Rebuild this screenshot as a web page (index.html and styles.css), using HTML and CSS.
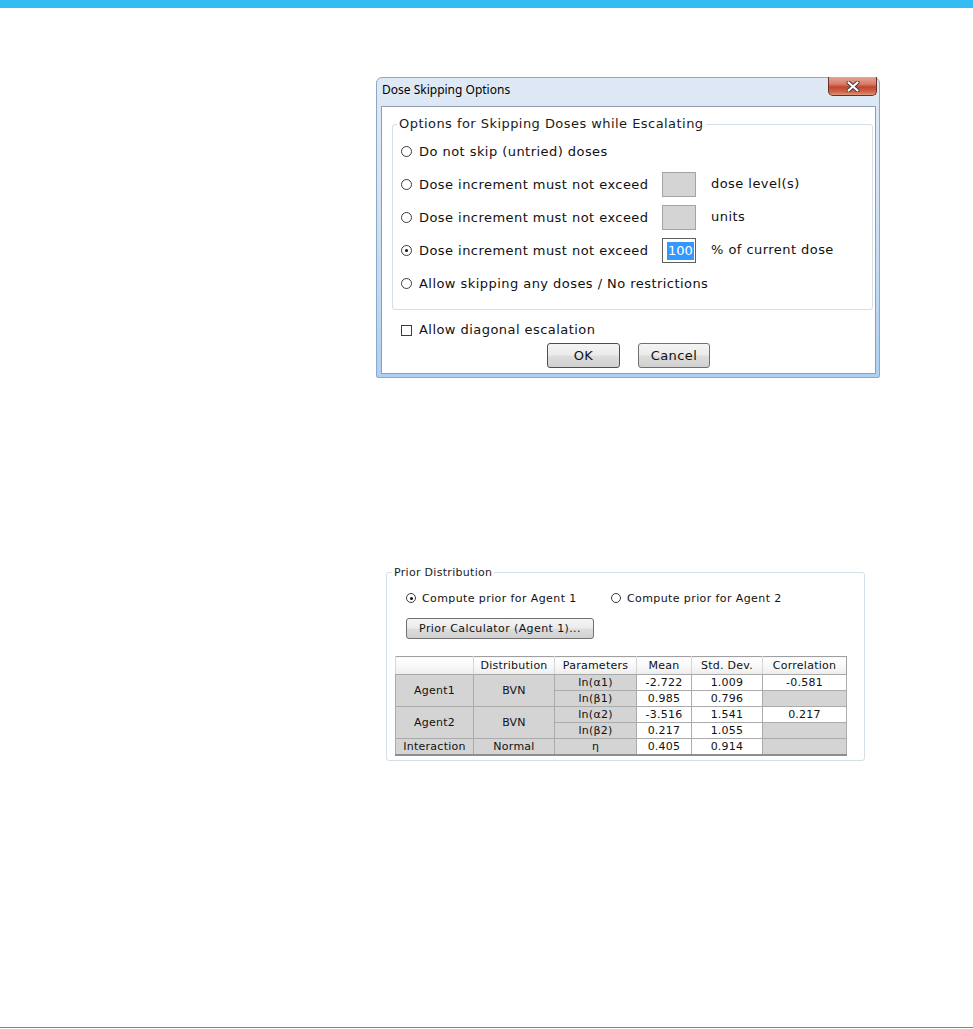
FILE: index.html
```html
<!DOCTYPE html>
<html>
<head>
    <title>Dose Skipping Options</title>
    <meta charset="UTF-8">
    <link rel="stylesheet" href="styles.css">
</head>
<body>

<div class="topbar"></div>

<div class="page">

    <div class="dialog">
        <div class="titlebar">
            <span class="title">Dose Skipping Options</span>
            <span class="close-btn">
                <svg width="14" height="11" viewBox="0 0 14 11">
                    <path d="M2.5 1.5 L11.5 9.5 M11.5 1.5 L2.5 9.5" stroke="#3a3a3a" stroke-width="4" stroke-linecap="round"/>
                    <path d="M2.5 1.5 L11.5 9.5 M11.5 1.5 L2.5 9.5" stroke="#ffffff" stroke-width="2.2" stroke-linecap="round"/>
                </svg>
            </span>
        </div>
        <div class="client">
            <fieldset class="group">
                <legend>Options for Skipping Doses while Escalating</legend>
                <div class="opt-row">
                    <span class="radio"></span>
                    <span class="opt-label">Do not skip (untried) doses</span>
                </div>
                <div class="opt-row">
                    <span class="radio"></span>
                    <span class="opt-label fixed">Dose increment must not exceed</span>
                    <span class="num-box"></span>
                    <span class="unit">dose level(s)</span>
                </div>
                <div class="opt-row">
                    <span class="radio"></span>
                    <span class="opt-label fixed">Dose increment must not exceed</span>
                    <span class="num-box"></span>
                    <span class="unit">units</span>
                </div>
                <div class="opt-row">
                    <span class="radio checked"></span>
                    <span class="opt-label fixed">Dose increment must not exceed</span>
                    <span class="num-box active"><span class="sel">100</span></span>
                    <span class="unit">% of current dose</span>
                </div>
                <div class="opt-row">
                    <span class="radio"></span>
                    <span class="opt-label">Allow skipping any doses / No restrictions</span>
                </div>
            </fieldset>

            <div class="check-row">
                <span class="checkbox"></span>
                <span class="opt-label">Allow diagonal escalation</span>
            </div>

            <div class="btn-row">
                <button class="win-btn ok">OK</button>
                <button class="win-btn cancel">Cancel</button>
            </div>
        </div>
    </div>

    <div class="prior">
        <fieldset class="prior-group">
            <legend>Prior Distribution</legend>
            <div class="agent-row">
                <div class="agent-opt first">
                    <span class="radio small checked"></span>
                    <span>Compute prior for Agent 1</span>
                </div>
                <div class="agent-opt">
                    <span class="radio small"></span>
                    <span>Compute prior for Agent 2</span>
                </div>
            </div>
            <button class="win-btn calc">Prior Calculator (Agent 1)...</button>

            <table class="prior-table">
                <colgroup>
                    <col style="width: 78px">
                    <col style="width: 81px">
                    <col style="width: 82px">
                    <col style="width: 55px">
                    <col style="width: 71px">
                    <col style="width: 84px">
                </colgroup>
                <thead>
                    <tr>
                        <th></th>
                        <th>Distribution</th>
                        <th>Parameters</th>
                        <th>Mean</th>
                        <th>Std. Dev.</th>
                        <th>Correlation</th>
                    </tr>
                </thead>
                <tbody>
                    <tr>
                        <td class="gray" rowspan="2">Agent1</td>
                        <td class="gray" rowspan="2">BVN</td>
                        <td class="gray">ln(α1)</td>
                        <td>-2.722</td>
                        <td>1.009</td>
                        <td>-0.581</td>
                    </tr>
                    <tr>
                        <td class="gray">ln(β1)</td>
                        <td>0.985</td>
                        <td>0.796</td>
                        <td class="gray"></td>
                    </tr>
                    <tr>
                        <td class="gray" rowspan="2">Agent2</td>
                        <td class="gray" rowspan="2">BVN</td>
                        <td class="gray">ln(α2)</td>
                        <td>-3.516</td>
                        <td>1.541</td>
                        <td>0.217</td>
                    </tr>
                    <tr>
                        <td class="gray">ln(β2)</td>
                        <td>0.217</td>
                        <td>1.055</td>
                        <td class="gray"></td>
                    </tr>
                    <tr class="last">
                        <td class="gray">Interaction</td>
                        <td class="gray">Normal</td>
                        <td class="gray">η</td>
                        <td>0.405</td>
                        <td>0.914</td>
                        <td class="gray"></td>
                    </tr>
                </tbody>
            </table>
        </fieldset>
    </div>

</div>

<div class="bottom-line"></div>

</body>
</html>
```

FILE: styles.css
```css
html, body {
    margin: 0;
    padding: 0;
}

body {
    height: 1029px;
    display: flex;
    flex-direction: column;
    background: white;
    font-family: "DejaVu Sans", Verdana, sans-serif;
    color: #111;
}

.topbar {
    height: 8px;
    background: #35bdf2;
    flex-shrink: 0;
}

.page {
    flex: 1;
}

.bottom-line {
    height: 1px;
    margin-bottom: 1px;
    background: #1ea2da;
}

/* ---------- dialog window ---------- */

.dialog {
    margin: 69px 0 0 376px;
    width: 504px;
    box-sizing: border-box;
    border: 1px solid #8ea8c4;
    border-radius: 6px 6px 2px 2px;
    background: linear-gradient(to bottom, #dfe9f6 0%, #d6e4f4 35%, #c1daf3 70%, #aed0f2 100%);
}

.titlebar {
    position: relative;
    height: 28px;
    box-sizing: border-box;
    padding: 1px 0 0 5px;
}

.title {
    font-family: "Noto Sans", "Open Sans", sans-serif;
    font-size: 12px;
    line-height: 16px;
    color: #000;
}

.close-btn {
    position: absolute;
    top: -1px;
    right: 2px;
    width: 49px;
    height: 19px;
    box-sizing: border-box;
    border: 1px solid #6b2e28;
    border-top: none;
    border-radius: 0 0 5px 5px;
    background: linear-gradient(to bottom, #e6a596 0%, #d57c68 40%, #c4442f 55%, #cf6a50 85%, #e09a80 100%);
    display: flex;
    align-items: center;
    justify-content: center;
}

.client {
    margin: 0 3px 3px 4px;
    border: 1px solid #8e9eb0;
    background: white;
    padding: 9px 2px 5px 10px;
    font-size: 13px;
    letter-spacing: 0.45px;
}

.group {
    margin: 0;
    padding: 3px 0 9px 0;
    border: 1px solid #d5dfe5;
    border-radius: 3px;
    min-width: 0;
}

.group legend {
    margin-left: 4px;
    padding: 0 2px;
    line-height: 16px;
    color: #1b1b1b;
}

.opt-row {
    height: 33px;
    display: flex;
    align-items: center;
    padding-left: 8px;
}

.radio {
    width: 11px;
    height: 11px;
    box-sizing: border-box;
    border: 1px solid #3c3c3c;
    border-radius: 50%;
    background: white;
    display: flex;
    align-items: center;
    justify-content: center;
    flex-shrink: 0;
}

.radio.checked::after {
    content: "";
    width: 3px;
    height: 3px;
    border-radius: 50%;
    background: #111;
}

.radio.small {
    width: 10px;
    height: 10px;
}

.opt-label {
    margin-left: 7px;
    line-height: 16px;
    white-space: nowrap;
}

.opt-label.fixed {
    width: 243px;
}

.num-box {
    width: 34px;
    height: 25px;
    box-sizing: border-box;
    border: 1px solid #a3a3a3;
    background: #d4d4d4;
    display: flex;
    align-items: center;
    letter-spacing: 0;
}

.num-box.active {
    background: white;
    border-color: #5f5f5f;
    padding-left: 4px;
}

.sel {
    background: #3399ff;
    color: white;
    line-height: 18px;
    padding: 0 1px;
}

.unit {
    margin-left: 15px;
    line-height: 16px;
    margin-bottom: 2px;
}

.check-row {
    margin-top: 12px;
    height: 16px;
    display: flex;
    align-items: center;
    padding-left: 9px;
}

.checkbox {
    width: 11px;
    height: 11px;
    box-sizing: border-box;
    border: 1px solid #3c3c3c;
    background: white;
}

.btn-row {
    margin-top: 5px;
    display: flex;
    justify-content: center;
    gap: 18px;
    padding-right: 8px;
}

.win-btn {
    font-family: "DejaVu Sans", Verdana, sans-serif;
    font-size: 13px;
    letter-spacing: 0.45px;
    color: #111;
    height: 25px;
    box-sizing: border-box;
    border: 1px solid #707070;
    border-radius: 3px;
    background: linear-gradient(to bottom, #f4f4f4 0%, #ebebeb 48%, #dddddd 52%, #d1d1d1 100%);
    padding: 0;
    cursor: pointer;
}

.win-btn.ok {
    width: 73px;
    border-color: #4f4f4f;
}

.win-btn.cancel {
    width: 72px;
}

/* ---------- prior distribution panel ---------- */

.prior {
    margin: 188px 0 0 386px;
    width: 479px;
}

.prior-group {
    margin: 0;
    padding: 0 0 4px 0;
    border: 1px solid #d5dfe5;
    border-radius: 3px;
    min-width: 0;
    font-size: 11px;
    letter-spacing: 0.4px;
}

.prior-group legend {
    margin-left: 5px;
    padding: 0 2px;
    line-height: 13px;
    color: #1b1b1b;
    letter-spacing: 0.3px;
}

.agent-row {
    margin: 12px 0 0 19px;
    height: 14px;
    display: flex;
    align-items: center;
}

.agent-opt {
    display: flex;
    align-items: center;
    gap: 6px;
}

.agent-opt.first {
    width: 205px;
}

.win-btn.calc {
    display: block;
    margin: 13px 0 0 19px;
    width: 188px;
    height: 21px;
    font-size: 11px;
    letter-spacing: 0.4px;
}

.prior-table {
    margin: 17px 0 0 8px;
    width: 451px;
    border-collapse: collapse;
    table-layout: fixed;
    font-size: 11px;
    letter-spacing: 0.25px;
    border: 1px solid #a0a0a0;
}

.prior-table th {
    height: 17px;
    padding: 0;
    font-weight: normal;
    background: linear-gradient(to bottom, #ffffff 0%, #f7f7f7 60%, #ececec 100%);
    border-left: 1px solid #d6d6d6;
    border-bottom: 1px solid #a8a8a8;
}

.prior-table td {
    height: 15px;
    padding: 0;
    text-align: center;
    border: 1px solid #ababab;
    background: white;
    line-height: 13px;
}

.prior-table td.gray {
    background: #d4d4d4;
}

.prior-table tr.last td {
    border-bottom: 2px solid #8e8e8e;
}
```
